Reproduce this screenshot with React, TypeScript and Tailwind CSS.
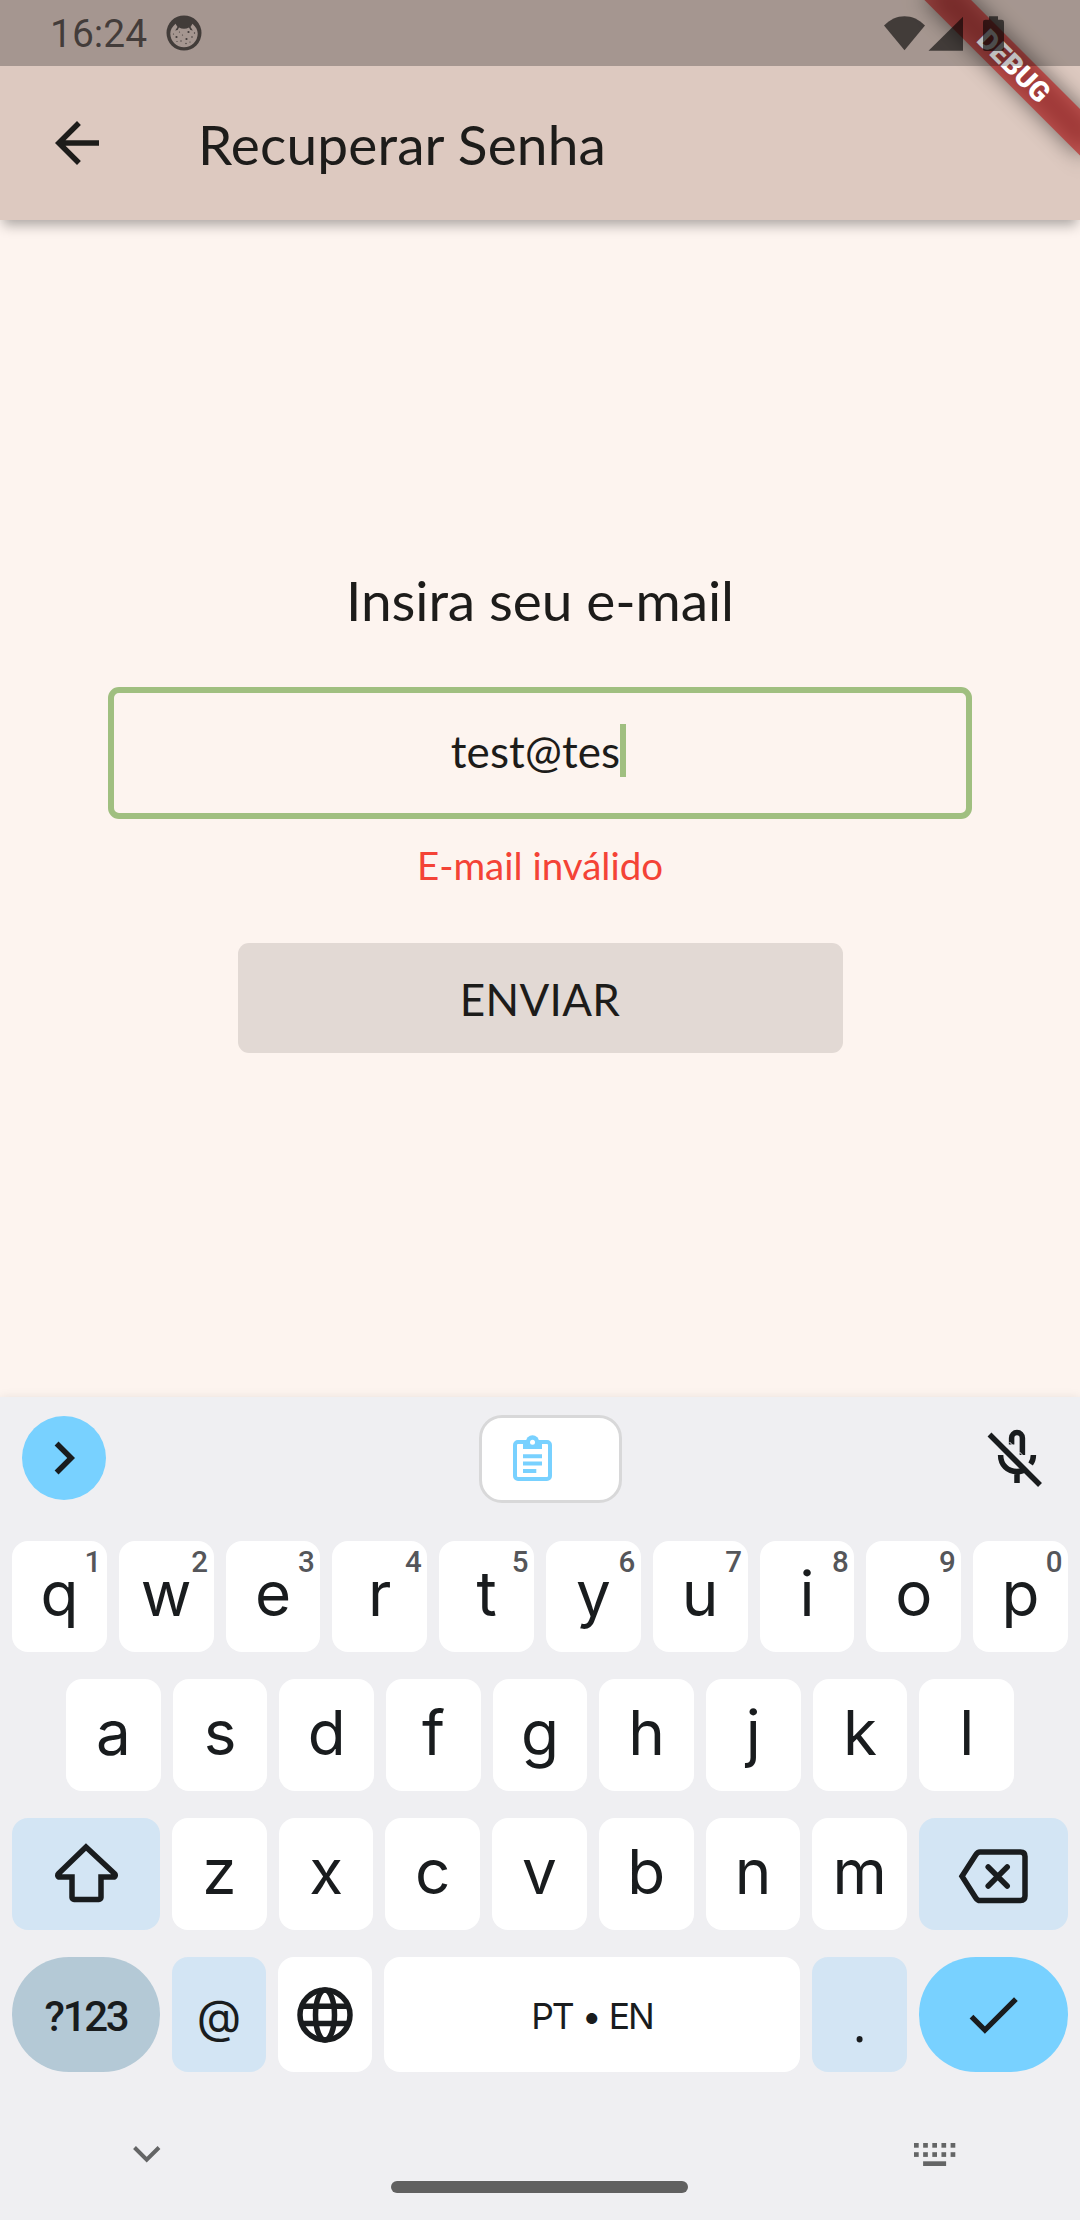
import type { ReactNode } from "react";
import { MdArrowBack, MdChevronRight } from "react-icons/md";

const INK = "#191c1e";

function FaceIcon() {
  return (
    <svg width="36" height="36" viewBox="0 0 36 36" className="text-black/60">
      <path
        fillRule="evenodd"
        fill="currentColor"
        d="M18 .5a17.5 17.5 0 1 1 0 35a17.5 17.5 0 1 1 0-35zM9.5 8.8C6 12 4.3 15 4.3 18.5a13.7 13.7 0 0 0 27.4 0c0-3.500-1.700-6.500-5.200-9.700l-2 3.200 2.300 3.500-2.400-.500-1.400-2.500c-3 1.700-7 1.700-10 0l-1.400 2.500-2.400.500 2.300-3.500z"
      />
      <g fill="currentColor">
        <circle cx="10.500" cy="22" r="1.100" />
        <circle cx="22.500" cy="17" r="1.100" />
        <circle cx="20.500" cy="24" r="1.100" />
        <circle cx="26" cy="22" r=".8" />
        <circle cx="16.500" cy="20" r=".6" />
        <circle cx="13.500" cy="17" r=".6" />
        <circle cx="15" cy="26" r=".7" />
        <circle cx="20" cy="28.500" r=".7" />
        <circle cx="7.500" cy="19" r=".6" />
        <circle cx="28.500" cy="18" r=".7" />
        <circle cx="24" cy="27" r=".6" />
        <circle cx="11" cy="26.500" r=".6" />
      </g>
    </svg>
  );
}

function StatusBar() {
  return (
    <div className="absolute inset-x-0 top-0 z-20 flex h-[66px] items-center bg-black/25 pl-[50px] pr-[76px]">
      <span className="w-[116px] pt-[3px] font-['Roboto'] text-[39px] leading-[63px] text-black/60">16:24</span>
      <FaceIcon />
      <svg width="120" height="35" viewBox="0 0 120 35" className="ml-auto text-black/60">
        <path fill="currentColor" d="M0 9.500C6 3.400 13 .2 20.500.2S35 3.400 41 9.500L20.500 34.300z" />
        <path fill="currentColor" d="M44.500 34.700 79 .800v33.900z" />
        <path fill="currentColor" d="M105 .2h9v3.500h3.500c1.700 0 2.500.8 2.500 2.500v26.300c0 1.700-.8 2.500-2.500 2.500h-16c-1.700 0-2.500-.8-2.500-2.500V6.200c0-1.700.8-2.500 2.500-2.500h3.500z" />
      </svg>
    </div>
  );
}

function DebugBanner() {
  return (
    <div className="absolute left-[970px] top-[77px] z-10 h-[33px] w-[220px] origin-[110px_-77px] rotate-45">
      <div className="absolute inset-0 bg-black/50 blur-[11px]" />
      <div className="relative flex h-full items-center justify-center bg-[#b71c1c]/63 font-['Roboto'] text-[28px] font-black leading-none text-white">
        DEBUG
      </div>
    </div>
  );
}

function Key({ label, hint }: { label: string; hint?: string }) {
  return (
    <div className="relative flex min-w-0 flex-1 items-center justify-center rounded-[16px] bg-white pb-[5px] font-['Inter'] text-[62px] leading-none">
      {label}
      {hint && (
        <span className="absolute right-[6px] top-[7px] font-['Roboto'] text-[29.500px] font-medium leading-[29px] tracking-[-0.5px] text-[#55565a]">
          {hint}
        </span>
      )}
    </div>
  );
}

function IconKey({ className, children }: { className: string; children: ReactNode }) {
  return <div className={`flex shrink-0 items-center justify-center ${className}`}>{children}</div>;
}

function Keyboard() {
  return (
    <section className="relative flex h-[823px] flex-col bg-[#efeff2] text-[#191c1e] shadow-[0_0_10px_rgba(0,0,0,0.08)]">
      <div className="flex h-[144px] items-center pb-[22px] pl-[22px] pr-[37px]">
        <div className="flex size-[84px] items-center justify-center rounded-full bg-[#78d1ff]">
          <MdChevronRight size={66} />
        </div>
        <div className="ml-[373px] mt-px flex h-[88px] w-[143px] items-center rounded-[23px] border-[3px] border-[#d8d8d9] bg-white pl-[31px]">
          <svg width="39" height="47" viewBox="0 0 39 47">
            <rect x="2" y="7" width="35" height="37" rx="3" fill="none" stroke="#78d1ff" strokeWidth="4" />
            <path fill="#78d1ff" d="M10 5h19v9H10z" />
            <circle cx="19.500" cy="7" r="6.700" fill="#78d1ff" />
            <circle cx="19.500" cy="7.300" r="2.500" fill="#fff" />
            <path d="M10 21.300h19M10 28.600h19M10 36h13.300" stroke="#78d1ff" strokeWidth="4" />
          </svg>
        </div>
        <svg width="56" height="58" viewBox="986 1430 56 58" className="ml-auto" fill="none" stroke={INK} strokeWidth="5.500">
          <path d="m988.500 1435.500 50.500 50.500" />
          <path d="M999.600 1456c0 10 7 16.600 16.400 16.600 4 0 7-1 9.500-3M1016 1472v12" />
          <path d="M1032.400 1456c0 3.500-1 6.500-2.800 9" />
          <path d="M1010.600 1445.500V1439a5.400 5.400 0 0 1 10.800 0v17" />
          <path d="m1008.500 1443 5 5M1018.500 1453l6 6" stroke="#efeff2" strokeWidth="1" />
        </svg>
      </div>

      <div className="flex h-[111px] gap-3 px-3">
        {"qwertyuiop".split("").map((c, i) => (
          <Key key={c} label={c} hint={String((i + 1) % 10)} />
        ))}
      </div>

      <div className="mt-[27px] flex h-[112px] gap-3 px-[66px]">
        {"asdfghjkl".split("").map((c) => (
          <Key key={c} label={c} />
        ))}
      </div>

      <div className="mt-[27px] flex h-[112px] gap-3 px-3">
        <IconKey className="w-[148px] rounded-[16px] bg-[#d3e5f4]">
          <svg width="64" height="64" viewBox="53.500 1842 64 64" fill="none" stroke={INK} strokeWidth="5.500">
            <path d="M85.500 1847 57.900 1873.800c-1.200 1.200-.6 3.200 1 3.200h12.600v20.500a2 2 0 0 0 2 2h25a2 2 0 0 0 2-2V1877h12.600c1.600 0 2.200-2 1-3.200z" />
          </svg>
        </IconKey>
        {"zxcvbnm".split("").map((c) => (
          <Key key={c} label={c} />
        ))}
        <IconKey className="w-[149px] rounded-[16px] bg-[#d3e5f4]">
          <svg width="70" height="56" viewBox="957.500 1848 70 56" className="mt-[4px] -ml-[2px]" fill="none" stroke={INK} strokeWidth="5.500">
            <path d="M961.500 1876.300 975 1855.200c1.300-2 2.200-3.200 4.500-3.200h40.500q4.500 0 4.500 4.500v39.600q0 4.500-4.500 4.500h-40.500c-2.300 0-3.200-1.200-4.500-3.200z" />
            <path strokeLinecap="round" d="m987.700 1867 19 19M1006.700 1867l-19 19" />
          </svg>
        </IconKey>
      </div>

      <div className="mt-[27px] flex h-[115px] gap-3 px-3">
        <div className="flex w-[148px] shrink-0 items-center justify-center rounded-[57px] bg-[#b4c9d6] pt-[4px] font-['Roboto'] text-[42px] font-medium leading-none tracking-[-2.300px]">
          ?123
        </div>
        <div className="flex w-[94px] shrink-0 items-center justify-center rounded-[16px] bg-[#d3e5f4] pt-[2px] font-['Inter'] text-[46px] leading-none">
          @
        </div>
        <IconKey className="w-[94px] rounded-[16px] bg-white">
          <svg width="56" height="56" viewBox="0 0 56 56" fill="none" stroke={INK} strokeWidth="5.500">
            <circle cx="28" cy="28" r="25" />
            <ellipse cx="28" cy="28" rx="9.500" ry="25" />
            <path d="M5 19.300h46M5 36.500h46" />
          </svg>
        </IconKey>
        <div className="flex flex-1 items-center justify-center rounded-[16px] bg-white pt-[4px] font-['Inter'] text-[35.500px] leading-none tracking-[-2px]">
          <span className="[word-spacing:1px]">PT • EN</span>
        </div>
        <div className="flex w-[95px] shrink-0 items-center justify-center rounded-[16px] bg-[#d3e5f4]">
          <span className="pt-[14px] font-['Open_Sans'] text-[52px] leading-none">.</span>
        </div>
        <IconKey className="w-[149px] rounded-[57px] bg-[#78d1ff]">
          <svg width="50" height="38" viewBox="969 1995.500 50 38" className="mt-[1px]" fill="none" stroke={INK} strokeWidth="5.300">
            <path d="m971.500 2016.200 13.400 13.400 31-31" />
          </svg>
        </IconKey>
      </div>

      <div className="flex flex-1 items-start">
        <svg width="28" height="18" viewBox="0 0 28 18" className="ml-[133px] mt-[73px]" fill="none" stroke="#646566" strokeWidth="4">
          <path d="m1.500 2.500 12.200 12.200L26 2.500" />
        </svg>
        <div className="ml-[230px] mt-[109px] h-[12px] w-[297px] rounded-full bg-[#606060]" />
        <svg width="42" height="23" viewBox="0 0 42 23" className="ml-[226px] mt-[71px]" fill="#646566">
          {[0, 9.150, 18.300, 27.450, 36.600].map((x) => (
            <g key={x}>
              <rect x={x} y="0" width="4.700" height="4.700" />
              <rect x={x} y="9.200" width="4.700" height="4.700" />
            </g>
          ))}
          <rect x="9.100" y="18.300" width="23" height="4.700" />
        </svg>
      </div>
    </section>
  );
}

export default function App() {
  return (
    <div className="relative flex h-[2220px] w-[1080px] flex-col overflow-hidden bg-[#fdf4ef] font-['Lato',sans-serif] text-[#1d1c1a]">
      <StatusBar />
      <DebugBanner />

      <header className="flex h-[220px] items-center bg-[#ddc9c0] pl-[44px] pt-[66px] shadow-[0_8px_12px_-3px_rgba(0,0,0,0.32)]">
        <MdArrowBack size={66} />
        <h1 className="ml-[88px] pt-[2px] text-[55px] leading-[66px] tracking-[0.150px]">Recuperar Senha</h1>
      </header>

      <main className="flex flex-1 flex-col items-center pt-[347px]">
        <h2 className="text-[55px] leading-[66px] tracking-[-0.100px]">Insira seu e-mail</h2>
        <div className="mt-[54px] flex h-[132px] w-[864px] items-center justify-center rounded-[11px] border-[6px] border-[#a0bf80] pb-[5px]">
          <span className="pt-px text-[44px] leading-[53px] tracking-[0.100px]">test@tes</span>
          <span className="mr-[3px] h-[53px] w-[6px] bg-[#a0bf80]" />
        </div>
        <p className="mt-[23px] text-[38.500px] leading-[46px] text-[#f44336]">E-mail inválido</p>
        <button className="mt-[55px] h-[110px] w-[605px] rounded-[11px] bg-[#e2d9d4] pt-[2px] text-[44px] leading-[53px] tracking-[0.300px]">
          ENVIAR
        </button>
      </main>

      <Keyboard />
    </div>
  );
}
